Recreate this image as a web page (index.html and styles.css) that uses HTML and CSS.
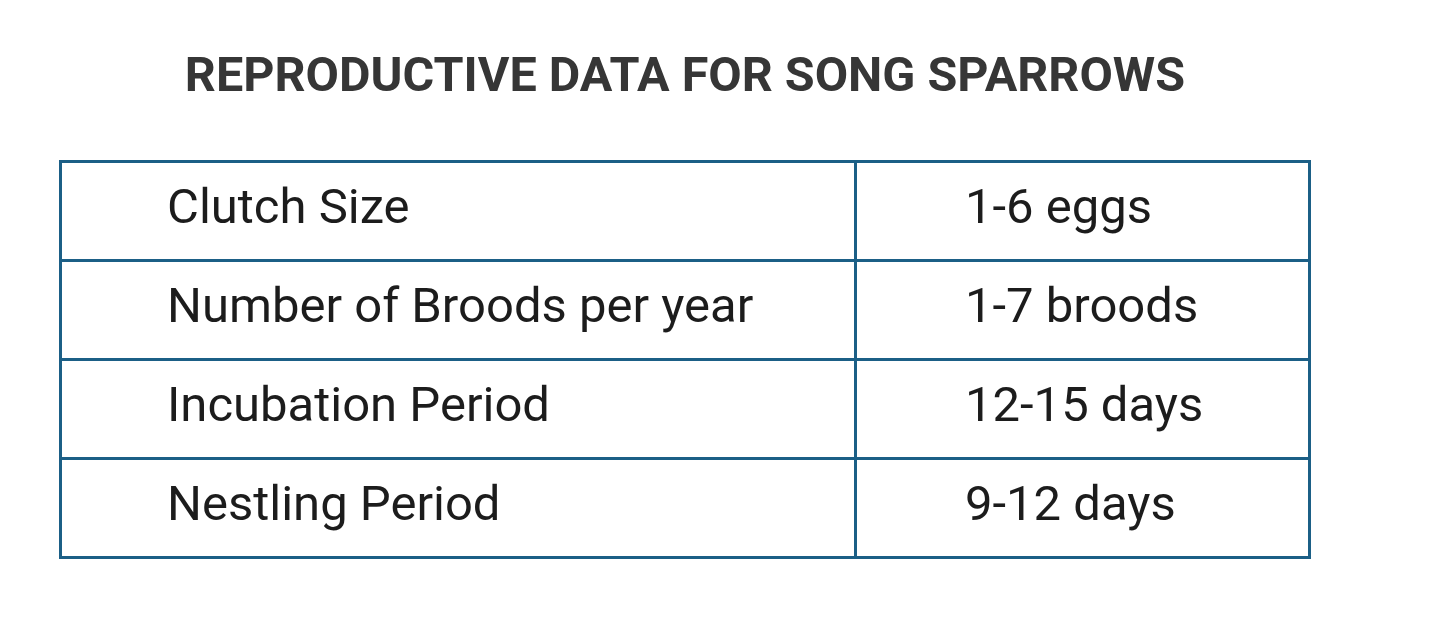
FILE: index.html
```html
<!DOCTYPE html>
<html lang="en">
<head>
<meta charset="utf-8">
<title>Reproductive Data for Song Sparrows</title>
<link rel="stylesheet" href="styles.css">
</head>
<body>
<main class="wrap">
  <h1 class="title">REPRODUCTIVE DATA FOR SONG SPARROWS</h1>
  <table class="data">
    <tbody>
      <tr><td class="label">Clutch Size</td><td class="value">1-6 eggs</td></tr>
      <tr><td class="label">Number of Broods per year</td><td class="value">1-7 broods</td></tr>
      <tr><td class="label">Incubation Period</td><td class="value">12-15 days</td></tr>
      <tr><td class="label">Nestling Period</td><td class="value">9-12 days</td></tr>
    </tbody>
  </table>
</main>
</body>
</html>
```

FILE: styles.css
```css
html, body {
  margin: 0;
  padding: 0;
  background: #ffffff;
}

body {
  font-family: Roboto, "Liberation Sans", Arial, sans-serif;
  color: #1c1c1c;
}

.wrap {
  width: 1252px;
  margin-left: 59px;
  padding-top: 45px;
}

.title {
  margin: 0 0 55px 0;
  font-size: 48.5px;
  line-height: 60px;
  font-weight: 700;
  color: #363636;
  text-align: center;
}

.data {
  width: 1252px;
  border-collapse: collapse;
  border: 3px solid #1b5f86;
}

.data td {
  border: 3px solid #1b5f86;
  height: 99px;
  padding: 0 0 8px 0;
  font-size: 49px;
  line-height: 60px;
  vertical-align: middle;
  box-sizing: border-box;
}

.data td.label {
  width: 795px;
  padding-left: 105px;
}

.data td.value {
  padding-left: 108px;
}
```
